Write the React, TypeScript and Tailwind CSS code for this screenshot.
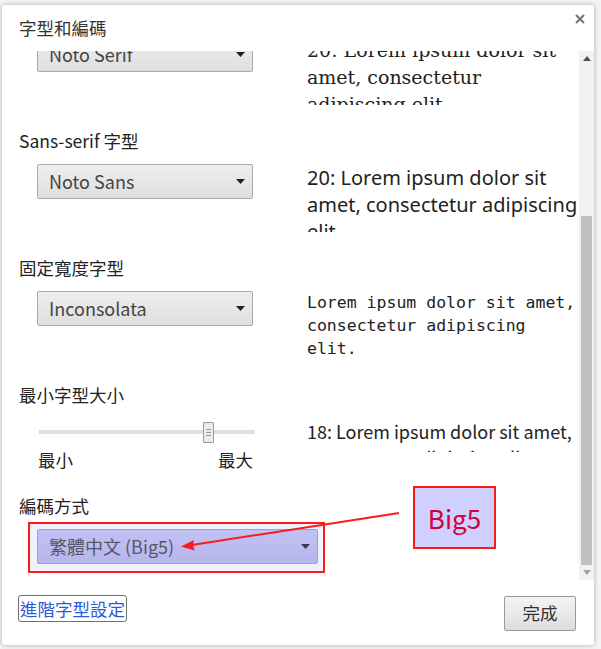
import React from 'react';

const ui = { fontFamily: '"Noto Sans CJK TC", "Noto Sans", sans-serif' };

const Caret: React.FC = () => (
  <svg width="9" height="5" viewBox="0 0 9 5" className="shrink-0">
    <path d="M0 0h9L4.5 5z" fill="#222" />
  </svg>
);

const Select: React.FC<{ value: string; width: string; tone?: 'gray' | 'violet' }> = ({ value, width, tone = 'gray' }) => (
  <div
    className={`${width} h-[35px] flex items-center justify-between pl-[11px] pr-[7px] rounded-[2px] border text-[18px] text-[#444] ${
      tone === 'violet'
        ? 'border-[#9a9ad0] bg-gradient-to-b from-[#c6c6f2] to-[#b9b9ea]'
        : 'border-[#a9a9a9] bg-gradient-to-b from-[#efefef] to-[#dedede]'
    }`}
  >
    <span>{value}</span>
    <Caret />
  </div>
);

const Section: React.FC<{ label: string; children: React.ReactNode; rowH?: string; last?: boolean }> = ({ label, children, rowH = 'h-[68px]', last }) => (
  <div className={last ? '' : 'mb-[24px]'}>
    <div className="h-[24px] leading-[24px] text-[17.5px] text-[#222]">{label}</div>
    <div className={`mt-[11px] flex ${rowH}`}>{children}</div>
  </div>
);

export default function App() {
  return (
    <div className="relative w-[601px] h-[649px] overflow-hidden bg-[#f4f4f4]" style={ui}>
      <div className="ml-[2px] mt-[5px] w-[592px] h-[640px] bg-white rounded-[3px] shadow-[0_0_5px_rgba(0,0,0,0.3)] flex flex-col">
        {/* header */}
        <div className="relative z-10 h-[46px] pt-[11px] pl-[17px] shrink-0 bg-white rounded-t-[3px]">
          <div className="text-[17.5px] leading-[24px] text-[#333]">字型和編碼</div>
          <svg className="absolute right-[9px] top-[9px]" width="10" height="10" viewBox="0 0 10 10">
            <path d="M1 1l8 8M9 1l-8 8" stroke="#777" strokeWidth="2.2" />
          </svg>
        </div>

        {/* scroll body */}
        <div className="flex h-[529px] shrink-0">
          <div className="w-[577px] overflow-hidden">
            <div className="-mt-[49px] pl-[17px]">
              <Section label="Serif 字型">
                <div className="ml-[18px]"><Select value="Noto Serif" width="w-[216px]" /></div>
                <div
                  className="ml-[54px] w-[272px] h-[68px] overflow-hidden text-[19px] leading-[27px] text-[#222]"
                  style={{ fontFamily: '"DejaVu Serif", "Liberation Serif", serif' }}
                >
                  20: Lorem ipsum dolor sit amet, consectetur adipiscing elit
                </div>
              </Section>

              <Section label="Sans-serif 字型">
                <div className="ml-[18px]"><Select value="Noto Sans" width="w-[216px]" /></div>
                <div
                  className="ml-[54px] w-[272px] h-[68px] overflow-hidden text-[20px] leading-[27px] text-[#222]"
                  style={{ fontFamily: '"Noto Sans", sans-serif' }}
                >
                  20: Lorem ipsum dolor sit amet, consectetur adipiscing elit
                </div>
              </Section>

              <Section label="固定寬度字型">
                <div className="ml-[18px]"><Select value="Inconsolata" width="w-[216px]" /></div>
                <div
                  className="ml-[54px] w-[272px] h-[68px] overflow-hidden text-[16.5px] leading-[23px] text-[#222]"
                  style={{ fontFamily: '"DejaVu Sans Mono", "Liberation Mono", monospace' }}
                >
                  Lorem ipsum dolor sit amet, consectetur adipiscing elit.
                </div>
              </Section>

              <div className="mb-[22px]">
                <div className="h-[24px] leading-[24px] text-[17.5px] text-[#222]">最小字型大小</div>
                <div className="mt-[11px] flex h-[54px]">
                  <div className="ml-[20px] w-[216px]">
                    <div className="relative h-[28px] flex items-center">
                      <div className="w-full h-[4px] bg-[#e2ded8]" />
                      <div className="absolute left-[164px] top-[4px] w-[11px] h-[21px] rounded-[1px] border border-[#999] bg-[#eeebe7] flex flex-col items-center justify-center gap-[2px]">
                        <div className="w-[5px] h-px bg-[#999]" />
                        <div className="w-[5px] h-px bg-[#999]" />
                        <div className="w-[5px] h-px bg-[#999]" />
                      </div>
                    </div>
                    <div className="mt-[2px] flex justify-between h-[24px] leading-[24px] text-[17.5px] text-[#222] pr-[2px] -ml-[1px]">
                      <span>最小</span>
                      <span>最大</span>
                    </div>
                  </div>
                  <div className="ml-[52px] w-[272px] h-[34px] overflow-hidden text-[18px] leading-[26px] text-[#222]">
                    18: Lorem ipsum dolor sit amet, consectetur adipiscing elit
                  </div>
                </div>
              </div>

              <Section label="編碼方式" rowH="h-[60px]" last>
                <div className="ml-[18px]"><Select value="繁體中文 (Big5)" width="w-[281px]" tone="violet" /></div>
              </Section>
            </div>
          </div>

          {/* scrollbar */}
          <div className="w-[15px] bg-[#f1f1f1] flex flex-col">
            <div className="h-[15px] flex items-center justify-center">
              <svg width="8" height="5" viewBox="0 0 8 5"><path d="M0 5h8L4 0z" fill="#505050" /></svg>
            </div>
            <div className="flex-1 relative">
              <div className="ml-[2px] mt-[150px] w-[11px] h-[349px] bg-[#c1c1c1]" />
            </div>
            <div className="h-[15px] flex items-center justify-center">
              <svg width="8" height="5" viewBox="0 0 8 5"><path d="M0 0h8L4 5z" fill="#a3a3a3" /></svg>
            </div>
          </div>
        </div>

        {/* footer */}
        <div className="flex justify-between items-start pt-[15px] pl-[16px] pr-[18px]">
          <button className="w-[109px] h-[27px] border border-[#707070] rounded-[3px] text-[17.5px] leading-[24px] text-[#2a5bd7] bg-white whitespace-nowrap">
            進階字型設定
          </button>
          <button className="mt-[1px] w-[72px] h-[35px] border border-[#9a9a9a] rounded-[2px] bg-gradient-to-b from-[#f4f4f4] to-[#dedede] text-[17.5px] text-[#333]">
            完成
          </button>
        </div>
      </div>

      {/* annotation overlays */}
      <div className="absolute left-[28px] top-[522px] w-[297px] h-[51px] border-2 border-[#ff1a1a] bg-[rgba(170,170,255,0.18)]" />
      <svg className="absolute left-0 top-0 pointer-events-none" width="601" height="649">
        <line x1="399" y1="513" x2="192" y2="545" stroke="#ff1a1a" strokeWidth="2" />
        <path d="M181 546.5l13-6.5-1 5.5 1.5 5z" fill="#ff1a1a" />
      </svg>
      <div className="absolute left-[413px] top-[486px] w-[83px] h-[63px] border-2 border-[#ff1a1a] bg-[#d0d0ff] flex items-center justify-center text-[26px] text-[#d4003a]">
        Big5
      </div>
    </div>
  );
}
